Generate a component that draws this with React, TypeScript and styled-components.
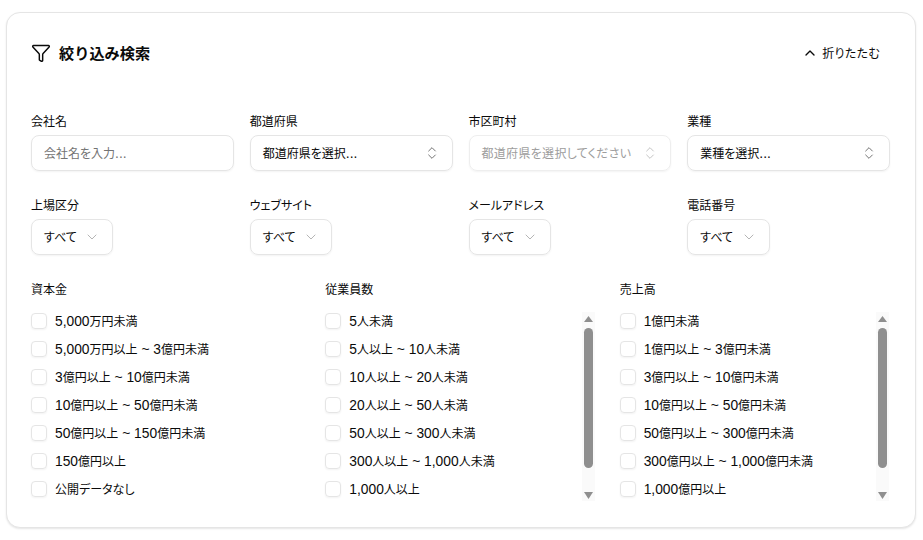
import React from 'react';
import styled, { createGlobalStyle } from 'styled-components';
import { ChevronDown, ChevronUp, ChevronsUpDown, Funnel } from 'lucide-react';

const GlobalStyle = createGlobalStyle`
  body {
    margin: 0;
    background: #fff;
    color: #0a0a0a;
    font-family: "Noto Sans CJK JP", "Liberation Sans", sans-serif;
    font-feature-settings: "palt";
  }
`;

const Page = styled.div`
  width: 923px;
  height: 540px;
  padding: 12px 7px 12px 6px;
  box-sizing: border-box;
`;

const Card = styled.section`
  height: 516px;
  box-sizing: border-box;
  padding: 24px 25px 0 24px;
  background: #fff;
  border: 1px solid #e5e5e5;
  border-radius: 14px;
  box-shadow: 0 1px 2px rgba(0, 0, 0, 0.1);
`;

const Header = styled.header`
  display: flex;
  align-items: center;
  justify-content: space-between;
  height: 32px;
  margin-bottom: 43px;
`;

const Title = styled.h2`
  display: flex;
  align-items: center;
  gap: 8px;
  margin: 0;
  font-size: 15.2px;
  font-weight: 700;
  font-feature-settings: normal;
`;

const TitleText = styled.span`
  margin-top: -2px;
`;

const CollapseButton = styled.button`
  display: flex;
  align-items: center;
  gap: 4px;
  margin-right: 10px;
  padding: 0;
  border: 0;
  background: none;
  color: #0a0a0a;
  font: inherit;
  font-size: 12px;
  letter-spacing: 0.3px;
`;

const FieldGrid = styled.div`
  display: grid;
  grid-template-columns: repeat(4, 1fr);
  gap: 16px;
  margin-bottom: 25px;
`;

const Field = styled.div`
  display: flex;
  flex-direction: column;
  align-items: flex-start;
  gap: 5px;
`;

const Label = styled.div`
  font-size: 12px;
  line-height: 18px;
`;

const Latin = styled.span`
  font-family: "Liberation Sans", sans-serif;
  font-size: 13.8px;
  line-height: 1;
`;

const Run = styled.span`
  margin-top: -2px;
`;

const TextInput = styled.div`
  width: 100%;
  height: 36px;
  box-sizing: border-box;
  display: flex;
  align-items: center;
  padding: 0 12px;
  border: 1px solid #e5e5e5;
  border-radius: 8px;
  box-shadow: 0 1px 2px rgba(0, 0, 0, 0.05);
  color: #737373;
  font-size: 12px;
`;

const SelectBox = styled.div<{ $disabled?: boolean; $fit?: boolean }>`
  width: ${(p) => (p.$fit ? 'auto' : '100%')};
  height: 36px;
  box-sizing: border-box;
  display: flex;
  align-items: center;
  justify-content: space-between;
  gap: ${(p) => (p.$fit ? '7.5px' : '8px')};
  padding: 0 12px;
  border: 1px solid ${(p) => (p.$disabled ? '#eeeeee' : '#e5e5e5')};
  border-radius: 8px;
  box-shadow: 0 1px 2px rgba(0, 0, 0, 0.05);
  color: ${(p) => (p.$disabled ? '#9d9d9d' : '#0a0a0a')};
  font-size: 12px;
  letter-spacing: ${(p) => (p.$disabled ? '0.3px' : '0')};
  white-space: nowrap;

  svg {
    flex: none;
    color: ${(p) => (p.$disabled ? '#c4c4c4' : '#737373')};
  }
`;

const RangeGrid = styled.div`
  display: grid;
  grid-template-columns: repeat(3, 1fr);
  gap: 24px;
`;

const RangeList = styled.div`
  display: flex;
  align-items: flex-start;
  margin-top: 9px;
`;

const Options = styled.ul`
  flex: 1;
  margin: 0;
  padding: 0;
  list-style: none;
`;

const Option = styled.li`
  display: flex;
  align-items: center;
  gap: 8px;
  height: 28px;
  font-size: 12px;
`;

const Checkbox = styled.span`
  flex: none;
  width: 16px;
  height: 16px;
  box-sizing: border-box;
  border: 1px solid #e5e5e5;
  border-radius: 4px;
  box-shadow: 0 1px 2px rgba(0, 0, 0, 0.05);
`;

const Rail = styled.div`
  flex: none;
  width: 13px;
  height: 189px;
  margin: 5px 0.7px 0 0;
  display: flex;
  flex-direction: column;
  align-items: center;
  background: #fafafa;
`;

const RailArrow = styled.svg`
  flex: none;
  width: 9px;
  height: 16px;
  fill: #8f8f8f;
`;

const Thumb = styled.div`
  flex: none;
  width: 9px;
  height: 140px;
  border-radius: 5px;
  background: #8f8f8f;
`;

const RailSpacer = styled.div`
  flex: 1;
`;

const fields = [
  { label: '都道府県', value: '都道府県を選択...' },
  { label: '市区町村', value: '都道府県を選択してください', disabled: true },
  { label: '業種', value: '業種を選択...' },
];

const filters = ['上場区分', 'ウェブサイト', 'メールアドレス', '電話番号'];

const ranges = [
  {
    label: '資本金',
    scroll: false,
    options: [
      '5,000万円未満',
      '5,000万円以上 ~ 3億円未満',
      '3億円以上 ~ 10億円未満',
      '10億円以上 ~ 50億円未満',
      '50億円以上 ~ 150億円未満',
      '150億円以上',
      '公開データなし',
    ],
  },
  {
    label: '従業員数',
    scroll: true,
    options: [
      '5人未満',
      '5人以上 ~ 10人未満',
      '10人以上 ~ 20人未満',
      '20人以上 ~ 50人未満',
      '50人以上 ~ 300人未満',
      '300人以上 ~ 1,000人未満',
      '1,000人以上',
    ],
  },
  {
    label: '売上高',
    scroll: true,
    options: [
      '1億円未満',
      '1億円以上 ~ 3億円未満',
      '3億円以上 ~ 10億円未満',
      '10億円以上 ~ 50億円未満',
      '50億円以上 ~ 300億円未満',
      '300億円以上 ~ 1,000億円未満',
      '1,000億円以上',
    ],
  },
];

// digits and dots sit larger than the kanji next to them
const Mixed: React.FC<{ text: string }> = ({ text }) => (
  <Run>
    {text.split(/([0-9,~. ]+)/).map((part, i) =>
      i % 2 === 1 ? <Latin key={i}>{part}</Latin> : part
    )}
  </Run>
);

const App: React.FC = () => {
  return (
    <Page>
      <GlobalStyle />
      <Card>
        <Header>
          <Title>
            <Funnel size={20} strokeWidth={1.75} />
            <TitleText>絞り込み検索</TitleText>
          </Title>
          <CollapseButton>
            <ChevronUp size={16} strokeWidth={2} />
            <Run>折りたたむ</Run>
          </CollapseButton>
        </Header>

        <FieldGrid>
          <Field>
            <Label>会社名</Label>
            <TextInput>
              <Mixed text="会社名を入力..." />
            </TextInput>
          </Field>
          {fields.map((f) => (
            <Field key={f.label}>
              <Label>{f.label}</Label>
              <SelectBox $disabled={f.disabled}>
                <Mixed text={f.value} />
                <ChevronsUpDown size={16} strokeWidth={1.5} />
              </SelectBox>
            </Field>
          ))}
        </FieldGrid>

        <FieldGrid>
          {filters.map((label) => (
            <Field key={label}>
              <Label>{label}</Label>
              <SelectBox $fit>
                <Run>すべて</Run>
                <ChevronDown size={16} strokeWidth={1.5} color="#b5b5b5" />
              </SelectBox>
            </Field>
          ))}
        </FieldGrid>

        <RangeGrid>
          {ranges.map((r) => (
            <div key={r.label}>
              <Label>{r.label}</Label>
              <RangeList>
                <Options>
                  {r.options.map((o) => (
                    <Option key={o}>
                      <Checkbox />
                      <Mixed text={o} />
                    </Option>
                  ))}
                </Options>
                {r.scroll && (
                  <Rail>
                    <RailArrow viewBox="0 0 9 16">
                      <path d="M4.5 4 L9 10 H0 Z" />
                    </RailArrow>
                    <Thumb />
                    <RailSpacer />
                    <RailArrow viewBox="0 0 9 16">
                      <path d="M0 7 H9 L4.5 14 Z" />
                    </RailArrow>
                  </Rail>
                )}
              </RangeList>
            </div>
          ))}
        </RangeGrid>
      </Card>
    </Page>
  );
};

export default App;
